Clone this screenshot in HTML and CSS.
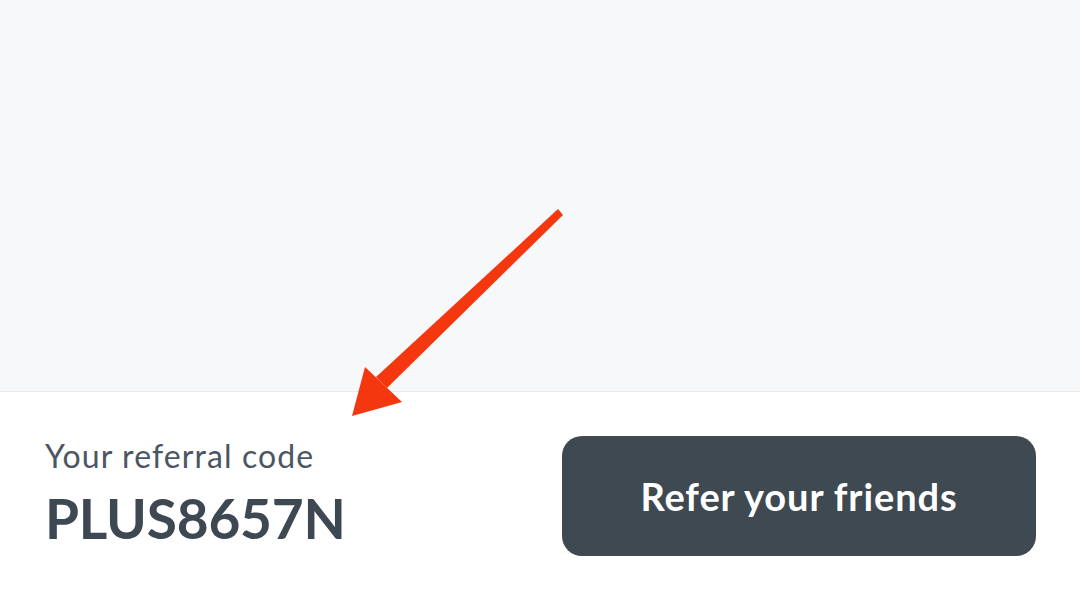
FILE: index.html
```html
<!DOCTYPE html>
<html>
<head>
<meta charset="utf-8">
<link rel="stylesheet" href="styles.css">
</head>
<body>
<div class="page">
  <div class="top"></div>
  <div class="bottom">
    <div class="code-block">
      <div class="label">Your referral code</div>
      <div class="code">PLUS8657N</div>
    </div>
    <button class="refer">Refer your friends</button>
  </div>
  <svg class="arrow" width="1080" height="612" viewBox="0 0 1080 612">
    <polygon fill="#f5370f" points="558,209 563,215 387,388 376,377"/>
    <polygon fill="#f5370f" points="365,367 402,402 352,416"/>
  </svg>
</div>
</body>
</html>
```
FILE: styles.css
```css
html, body {
  margin: 0;
  padding: 0;
  background: #ffffff;
}
.page {
  position: relative;
  width: 1080px;
  height: 612px;
  overflow: hidden;
  font-family: "Lato", "Noto Sans", sans-serif;
}
.top {
  height: 391px;
  background: #f7f8fa;
  border-bottom: 1px solid #e6e9ed;
}
.bottom {
  display: flex;
  align-items: flex-start;
  justify-content: space-between;
  padding: 44px 44px 0 45px;
}
.code-block {
  display: flex;
  flex-direction: column;
  padding-top: 2px;
}
.label {
  font-size: 32px;
  color: #4b5663;
  line-height: 36px;
  letter-spacing: 1.1px;
}
.code {
  font-size: 55px;
  font-weight: 700;
  color: #3e4852;
  line-height: 60px;
  margin-top: 14px;
  letter-spacing: -0.2px;
}
.refer {
  width: 474px;
  height: 120px;
  border: none;
  border-radius: 20px;
  background: #3e4952;
  color: #ffffff;
  font-family: "Lato", "Noto Sans", sans-serif;
  font-size: 38px;
  font-weight: 700;
  letter-spacing: 0.9px;
}
.arrow {
  position: absolute;
  left: 0;
  top: 0;
}
```
